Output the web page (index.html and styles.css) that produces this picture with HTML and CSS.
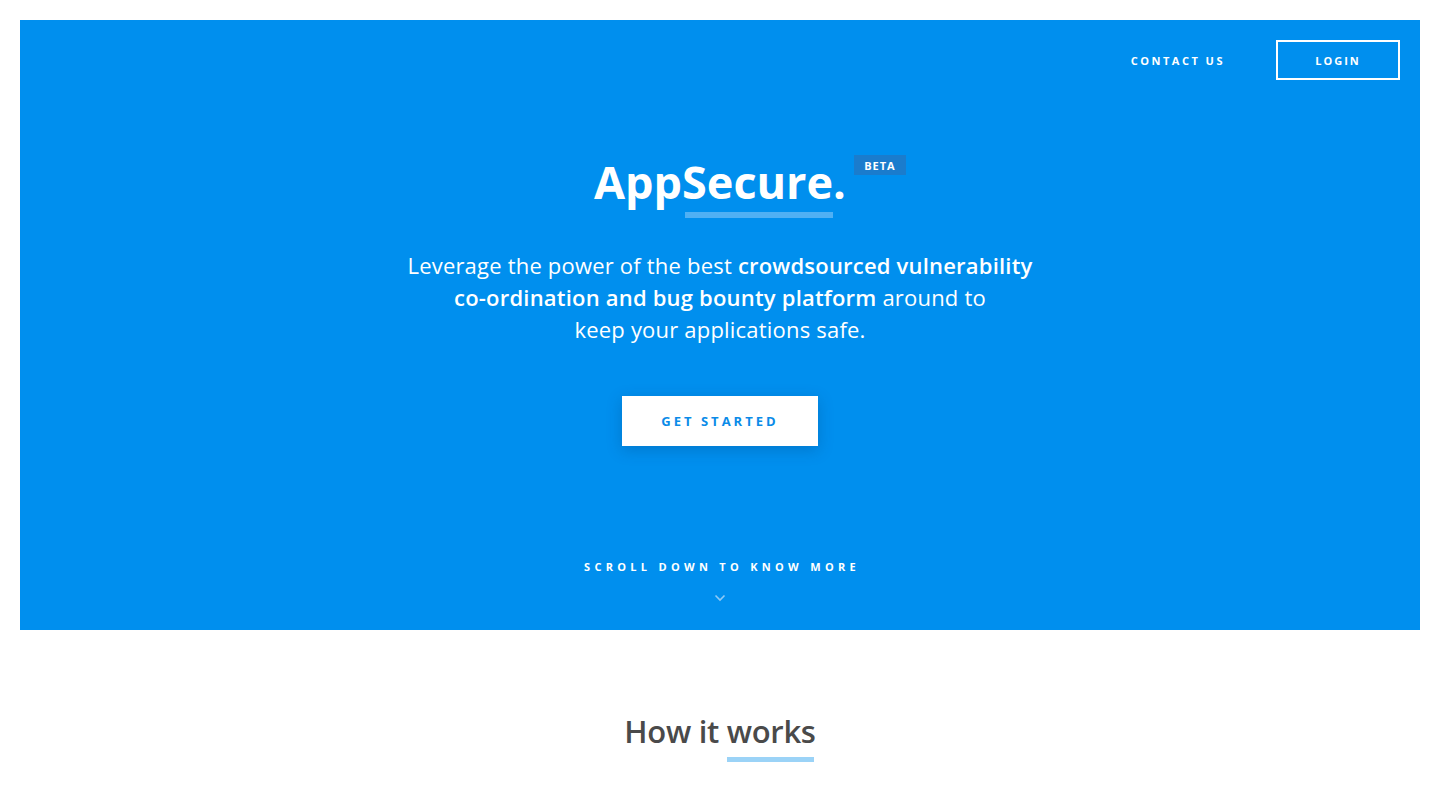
FILE: index.html
```html
<!DOCTYPE html>
<html lang="en">
<head>
<meta charset="utf-8">
<title>AppSecure</title>
<link rel="stylesheet" href="styles.css">
</head>
<body>
<section class="hero">
  <nav class="nav">
    <a class="nav-link" href="#">CONTACT US</a>
    <a class="nav-btn" href="#">LOGIN</a>
  </nav>
  <div class="hero-body">
    <div class="brand">
      <h1 class="title">AppSecure.</h1>
      <span class="beta">BETA</span>
    </div>
    <div class="title-bar"></div>
    <p class="lead">Leverage the power of the best <strong>crowdsourced vulnerability<br>co-ordination and bug bounty platform</strong> around to<br>keep your applications safe.</p>
    <a class="cta" href="#">GET STARTED</a>
  </div>
  <div class="scroll">
    <span class="scroll-text">SCROLL DOWN TO KNOW MORE</span>
    <svg class="chev" width="12" height="8" viewBox="0 0 12 8"><path d="M1.5 1.5 L6 6 L10.5 1.5" fill="none" stroke="#8fcaf6" stroke-width="1.6"/></svg>
  </div>
</section>
<section class="how">
  <h2 class="how-title">How it works</h2>
  <div class="how-bar"></div>
</section>
</body>
</html>
```
FILE: styles.css
```css
* { box-sizing: border-box; }
html, body { margin: 0; padding: 0; background: #fff; }
body { padding: 20px; font-family: "Open Sans", Lato, sans-serif; }
a { text-decoration: none; }

.hero {
  background: #008fee;
  height: 610px;
  display: flex;
  flex-direction: column;
  color: #fff;
}
.nav {
  display: flex;
  justify-content: flex-end;
  align-items: center;
  padding: 20px 20px 0 0;
  gap: 51px;
}
.nav-link {
  color: #fff;
  font-size: 11px;
  font-weight: 700;
  letter-spacing: 2.5px;
}
.nav-btn {
  color: #fff;
  font-size: 11px;
  font-weight: 700;
  letter-spacing: 2px;
  width: 124px;
  height: 40px;
  border: 2px solid #fff;
  display: flex;
  align-items: center;
  justify-content: center;
}
.hero-body {
  display: flex;
  flex-direction: column;
  align-items: center;
  padding-top: 74px;
}
.brand {
  position: relative;
  height: 56px;
  display: flex;
  align-items: center;
}
.title {
  margin: 0;
  font-size: 45px;
  font-weight: 700;
  line-height: 56px;
  letter-spacing: 0;
}
.beta {
  position: absolute;
  left: calc(100% + 8px);
  top: 1px;
  background: #1a7ccd;
  color: #fff;
  font-size: 11px;
  font-weight: 700;
  letter-spacing: 1px;
  width: 52px;
  height: 20px;
  display: flex;
  align-items: center;
  justify-content: center;
}
.title-bar {
  width: 148px;
  height: 6px;
  background: #4fb0f4;
  margin: 2px 0 0 78px;
}
.lead {
  margin: 31px 0 0;
  text-align: center;
  font-size: 22px;
  line-height: 32px;
  font-weight: 400;
  letter-spacing: 0.2px;
}
.lead strong { font-weight: 600; }
.cta {
  margin-top: 51px;
  width: 196px;
  height: 50px;
  background: #fff;
  color: #0a8be8;
  font-size: 13px;
  font-weight: 700;
  letter-spacing: 3px;
  display: flex;
  align-items: center;
  justify-content: center;
  box-shadow: 0 4px 14px rgba(0, 60, 120, 0.28);
}
.scroll {
  margin-top: auto;
  padding-bottom: 28px;
  display: flex;
  flex-direction: column;
  align-items: center;
  gap: 20px;
}
.scroll-text {
  font-size: 11px;
  font-weight: 700;
  letter-spacing: 4.3px;
  margin-right: -4px;
}
.how {
  display: flex;
  flex-direction: column;
  align-items: center;
  padding-top: 80px;
}
.how-title {
  margin: 0;
  color: #4a4a4a;
  font-size: 31px;
  font-weight: 600;
  line-height: 42px;
  letter-spacing: -0.3px;
}
.how-bar {
  width: 87px;
  height: 5px;
  background: #9bd3f7;
  margin: 5px 0 0 101px;
}
```
